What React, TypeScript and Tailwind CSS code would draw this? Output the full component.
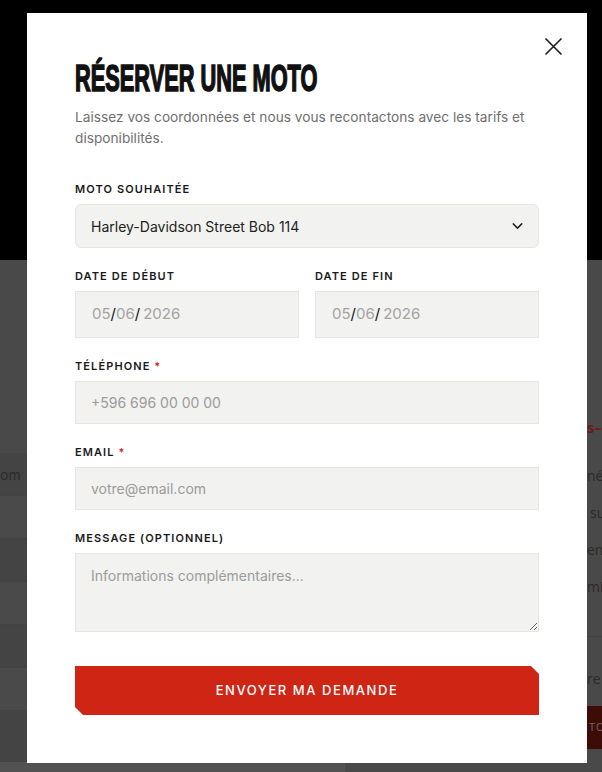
import React from "react";
import { ChevronDown } from "lucide-react";

const labelCls =
  "block text-[11px] leading-4 font-semibold tracking-[0.1em] uppercase text-[#1a1a1a] mb-[7px]";
const fieldCls =
  "w-full bg-[#f2f2f0] border border-[#e6e5e1] px-[15px] text-[14px] text-[#222] placeholder:text-[#9b9b9b] outline-none";

function DateBox() {
  return (
    <div className="h-[47px] bg-[#f2f2f0] border border-[#e6e5e1] flex items-center pl-4 text-[15px] text-[#a3a3a3]">
      <span>05</span>
      <span className="text-[#111]">/</span>
      <span>06</span>
      <span className="text-[#111]">/</span>
      <span className="ml-[3px]">2026</span>
    </div>
  );
}

export default function App() {
  const rows = [0, 1, 2, 3, 4, 5, 6];
  return (
    <div className="relative w-full h-[772px] overflow-hidden font-['Inter',sans-serif] flex flex-col">
      {/* page behind the overlay (already dimmed) */}
      <div className="h-[260px] bg-black" />
      <div className="flex-1 bg-[#494949] flex">
        <div className="w-[345px] pt-[193px]">
          {rows.map((i) => (
            <div
              key={i}
              className={`h-[43px] border-b border-[#424242] text-[14px] text-[#2c2c2c] flex items-center ${
                i % 2 === 0 ? "bg-[#444444]" : "bg-[#4a4a4a]"
              }`}
            >
              {i === 0 ? "om" : ""}
            </div>
          ))}
          <div className="h-[8px] bg-[#444444]" />
          <div className="h-[10px] bg-[#525252]" />
        </div>
        <div className="flex-1 min-w-0 pl-[242px] pt-[158px] font-['Open_Sans',sans-serif] whitespace-nowrap overflow-hidden">
          <div className="text-[15px] leading-[18px] font-bold text-[#6e1a10]">s–</div>
          <div className="mt-[21px] text-[14px] leading-[37px] text-[#2a2a2a]">
            <div>né</div>
            <div className="pl-[3px]">su</div>
            <div>en</div>
            <div>mi</div>
          </div>
          <div className="mt-[31px] border-t border-[#404040]" />
          <div className="mt-[32px] text-[14px] leading-5 text-[#2a2a2a]">re</div>
          <div className="mt-[17px] h-[43px] bg-[#3e0c07] flex items-center pl-[2px] text-[11px] tracking-[0.08em] text-[#6a6a6a]">
            TO
          </div>
        </div>
      </div>

      {/* modal */}
      <div className="absolute left-[27px] top-[13px] w-[560px] bg-white px-12 pt-12 pb-12">
        <button className="absolute top-[24px] right-[24px] text-[#1a1a1a]" aria-label="Fermer">
          <svg width="19" height="19" viewBox="0 0 19 19" fill="none" stroke="currentColor" strokeWidth="1.6">
            <path d="M1.5 1.5 17.5 17.5M17.5 1.5 1.5 17.5" />
          </svg>
        </button>

        <h2 className="font-['Liberation_Sans',sans-serif] font-bold text-[36px] leading-9 text-[#111] uppercase whitespace-nowrap origin-left scale-x-[0.605] [-webkit-text-stroke:1.6px_#111]">
          Réserver une moto
        </h2>
        <p className="mt-[10px] text-[13.7px] leading-[21px] text-[#6f6f6f]">
          Laissez vos coordonnées et nous vous recontactons avec les tarifs et disponibilités.
        </p>

        <form className="mt-8 flex flex-col gap-5" onSubmit={(e) => e.preventDefault()}>
          <div>
            <label className={labelCls}>Moto souhaitée</label>
            <div className="relative">
              <select className={`${fieldCls} h-[44px] rounded-md appearance-none`} defaultValue="sb">
                <option value="sb">Harley-Davidson Street Bob 114</option>
              </select>
              <ChevronDown
                size={17}
                strokeWidth={2}
                className="absolute right-[13px] top-1/2 -translate-y-1/2 text-[#222] pointer-events-none"
              />
            </div>
          </div>

          <div className="grid grid-cols-2 gap-4">
            <div>
              <label className={labelCls}>Date de début</label>
              <DateBox />
            </div>
            <div>
              <label className={labelCls}>Date de fin</label>
              <DateBox />
            </div>
          </div>

          <div>
            <label className={labelCls}>
              Téléphone <span className="text-[#d0281a]">*</span>
            </label>
            <input className={`${fieldCls} h-[43px]`} placeholder="+596 696 00 00 00" />
          </div>

          <div>
            <label className={labelCls}>
              Email <span className="text-[#d0281a]">*</span>
            </label>
            <input className={`${fieldCls} h-[43px]`} placeholder="votre@email.com" />
          </div>

          <div>
            <label className={labelCls}>Message (optionnel)</label>
            <textarea
              className={`${fieldCls} h-[79px] pt-[11px] leading-[22px] block`}
              placeholder="Informations complémentaires..."
            />
          </div>

          <button
            type="submit"
            className="mt-[14px] h-[49px] w-full bg-[#cf2515] text-white text-[13px] font-medium tracking-[0.12em] uppercase [clip-path:polygon(0_0,calc(100%-8px)_0,100%_8px,100%_100%,8px_100%,0_calc(100%-8px))]"
          >
            Envoyer ma demande
          </button>
        </form>
      </div>
    </div>
  );
}
